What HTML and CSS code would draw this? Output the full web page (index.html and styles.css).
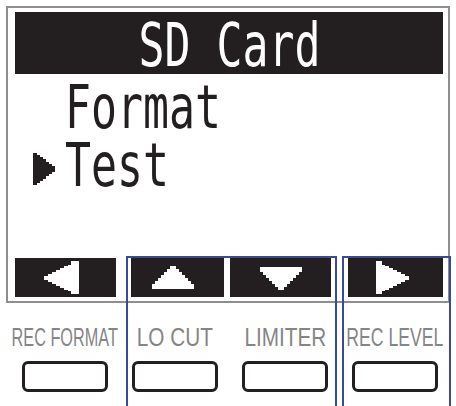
FILE: index.html
```html
<!DOCTYPE html>
<html lang="en">
<head>
<meta charset="utf-8">
<title>SD Card</title>
<link rel="stylesheet" href="styles.css">
</head>
<body>
<div class="panel">
  <div class="screen">
    <div class="title"><span class="lcd lcd-center">SD Card</span></div>
    <ul class="menu">
      <li class="item"><span class="cursor"></span><span class="lcd item-text">Format</span></li>
      <li class="item">
        <svg class="cursor" viewBox="0 0 22 32" shape-rendering="crispEdges">
          <rect x="0" y="0" width="4" height="32"/>
          <rect x="4" y="2" width="3" height="28"/>
          <rect x="7" y="4" width="3" height="24"/>
          <rect x="10" y="6" width="3" height="20"/>
          <rect x="13" y="9" width="3" height="14"/>
          <rect x="16" y="11" width="3" height="10"/>
          <rect x="19" y="13" width="3" height="6"/>
        </svg>
        <span class="lcd item-text">Test</span>
      </li>
    </ul>
    <div class="softkeys">
      <div class="key key-left">
        <svg viewBox="0 0 101 39" shape-rendering="crispEdges">
          <rect x="29" y="17.5" width="4" height="4"/>
          <rect x="33" y="15.5" width="4" height="8"/>
          <rect x="37" y="13.5" width="4" height="12"/>
          <rect x="41" y="11.5" width="4" height="16"/>
          <rect x="45" y="9.5" width="4" height="20"/>
          <rect x="49" y="7.5" width="4" height="24"/>
          <rect x="53" y="6.5" width="3" height="26"/>
          <rect x="56" y="3" width="8" height="33"/>
        </svg>
      </div>
      <div class="key key-up">
        <svg viewBox="0 0 93 39" shape-rendering="crispEdges">
          <rect x="39" y="8" width="6" height="3"/>
          <rect x="36" y="11" width="12" height="3"/>
          <rect x="33" y="14" width="18" height="3"/>
          <rect x="30" y="17" width="24" height="3"/>
          <rect x="27" y="20" width="30" height="3"/>
          <rect x="24" y="23" width="36" height="3"/>
          <rect x="21" y="26" width="42" height="5"/>
        </svg>
      </div>
      <div class="key key-down">
        <svg viewBox="0 0 101 39" shape-rendering="crispEdges">
          <rect x="29.5" y="9" width="42" height="5"/>
          <rect x="32.5" y="14" width="36" height="3"/>
          <rect x="35.5" y="17" width="30" height="3"/>
          <rect x="38.5" y="20" width="24" height="3"/>
          <rect x="41.5" y="23" width="18" height="3"/>
          <rect x="44.5" y="26" width="12" height="3"/>
          <rect x="47.5" y="29" width="6" height="3"/>
        </svg>
      </div>
      <div class="key key-right">
        <svg viewBox="0 0 95 39" shape-rendering="crispEdges">
          <rect x="28" y="3" width="6" height="33"/>
          <rect x="34" y="6.5" width="3" height="26"/>
          <rect x="37" y="7.5" width="4" height="24"/>
          <rect x="41" y="9.5" width="4" height="20"/>
          <rect x="45" y="11.5" width="4" height="16"/>
          <rect x="49" y="13.5" width="4" height="12"/>
          <rect x="53" y="15.5" width="4" height="8"/>
          <rect x="57" y="17.5" width="4" height="4"/>
        </svg>
      </div>
    </div>
  </div>

  <div class="controls">
    <div class="control"><span class="label label-format">REC FORMAT</span><span class="button"></span></div>
    <div class="control"><span class="label">LO CUT</span><span class="button"></span></div>
    <div class="control"><span class="label">LIMITER</span><span class="button"></span></div>
    <div class="control"><span class="label label-level">REC LEVEL</span><span class="button"></span></div>
  </div>

  <div class="frame frame-updown"></div>
  <div class="frame frame-right"></div>
</div>
</body>
</html>
```
FILE: styles.css
```css
html, body {
  margin: 0;
  background: #fff;
}

.panel {
  position: relative;
  width: 456px;
  height: 406px;
}

/* LCD screen */
.screen {
  box-sizing: border-box;
  margin: 6px 0 0 6px;
  width: 444px;
  height: 297px;
  border: 2px solid #8e8e8e;
  padding: 4px 5px 4px 7px;
  display: flex;
  flex-direction: column;
}

.lcd {
  display: inline-block;
  font-family: "DejaVu Sans Mono", monospace;
  font-size: 60px;
  white-space: pre;
  transform: scaleX(0.72);
}

.title {
  height: 62px;
  background: #231f20;
  color: #fff;
  text-align: center;
  line-height: 66px;
}

.lcd-center {
  transform-origin: center;
}

.menu {
  list-style: none;
  margin: 4px 0 0;
  padding: 0 0 0 18px;
  color: #231f20;
}

.item {
  display: flex;
  align-items: flex-start;
  height: 58px;
}

.cursor {
  flex: none;
  width: 22px;
  height: 32px;
  margin-top: 17px;
  fill: #231f20;
}

.item-text {
  margin: 1px 0 0 10px;
  line-height: 56px;
  transform-origin: left center;
}

/* soft key bar at the bottom of the display */
.softkeys {
  margin-top: auto;
  display: flex;
  height: 39px;
}

.key {
  height: 39px;
  background: #231f20;
  fill: #fff;
}

.key svg {
  display: block;
  width: 100%;
  height: 100%;
}

.key-left { width: 101px; }
.key-up { width: 93px; margin-left: 15px; }
.key-down { width: 101px; margin-left: 6px; }
.key-right { width: 95px; margin-left: 17px; }

/* hardware buttons below the display */
.controls {
  display: grid;
  grid-template-columns: repeat(4, 110px);
  padding-left: 10px;
  margin-top: 22px;
}

.control {
  display: flex;
  flex-direction: column;
  align-items: center;
}

.label {
  display: inline-block;
  font-family: "Liberation Sans", Arial, sans-serif;
  font-size: 25px;
  line-height: 25px;
  color: #858585;
  white-space: nowrap;
  transform: scaleX(0.83);
}

.label-format { transform: scaleX(0.65); }
.label-level { transform: scaleX(0.705); }

.button {
  box-sizing: border-box;
  width: 86px;
  height: 31px;
  margin-top: 11px;
  border: 3px solid #231f20;
  border-radius: 6px;
  background: #fff;
}

/* highlight frames around the active keys */
.frame {
  position: absolute;
  top: 250px;
  height: 154px;
  box-sizing: border-box;
  border: 2px solid #3b4a98;
}

.frame-updown {
  left: 126px;
  width: 211px;
}

.frame-right {
  left: 342px;
  width: 109px;
}
```
